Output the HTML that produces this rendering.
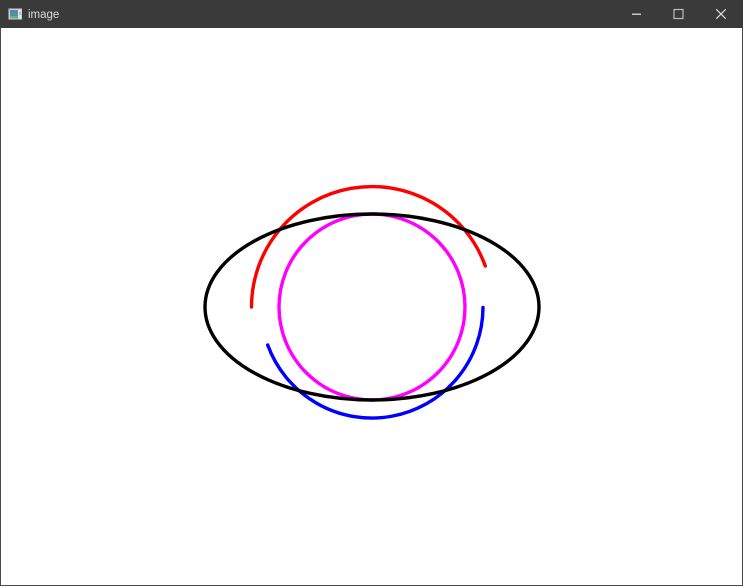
<!DOCTYPE html>
<html>
<head>
<meta charset="utf-8">
<style>
html,body{margin:0;padding:0;width:743px;height:586px;overflow:hidden;background:#fff}
.title{position:absolute;left:28px;top:7px;font:11.5px/16px "Liberation Sans",sans-serif;color:#dcdcdc}
svg{position:absolute;left:0;top:0}
</style>
</head>
<body>
<svg width="743" height="586" viewBox="0 0 743 586" xmlns="http://www.w3.org/2000/svg">
<rect width="743" height="586" fill="#fff"/>
<rect width="743" height="28" fill="#3a3a3a"/>
<rect x="0" y="28" width="1" height="558" fill="#4a4a4a"/>
<rect x="742" y="28" width="1" height="558" fill="#4a4a4a"/>
<rect x="0" y="585" width="743" height="1" fill="#4a4a4a"/>
<!-- app icon -->
<rect x="8.5" y="8.5" width="13.5" height="11" fill="#c9d0d0"/>
<rect x="10" y="10" width="7" height="8.5" fill="#4a9a92"/>
<rect x="10" y="10" width="7" height="3" fill="#5a86b0"/>
<rect x="10" y="16" width="7" height="2.5" fill="#6fb08a"/>
<rect x="17" y="10" width="1" height="8.5" fill="#7a8a8a"/>
<rect x="18" y="10" width="3" height="8.5" fill="#dfe8e4"/>
<rect x="19" y="12" width="2" height="3" fill="#9fc8b8"/>
<!-- window controls -->
<rect x="632" y="13.6" width="9" height="1.2" fill="#e8e8e8"/>
<rect x="674" y="9.5" width="9" height="9" fill="none" stroke="#bdbdbd" stroke-width="1.2"/>
<path d="M716.3 9.3L725.7 18.7M725.7 9.3L716.3 18.7" stroke="#dcdcdc" stroke-width="1.2" fill="none"/>
<!-- drawing -->
<path d="M251.5 307A120.5 120.5 0 0 1 485.3 266" fill="none" stroke="#ff0000" stroke-width="3.4" stroke-linecap="round"/>
<path d="M483 307.5A111 111 0 0 1 267.7 345" fill="none" stroke="#0000ff" stroke-width="3.4" stroke-linecap="round"/>
<circle cx="372" cy="307" r="93" fill="none" stroke="#ff00ff" stroke-width="3.4"/>
<ellipse cx="372" cy="307" rx="167" ry="93" fill="none" stroke="#000000" stroke-width="3.4"/>
</svg>
<div class="title">image</div>
</body>
</html>
